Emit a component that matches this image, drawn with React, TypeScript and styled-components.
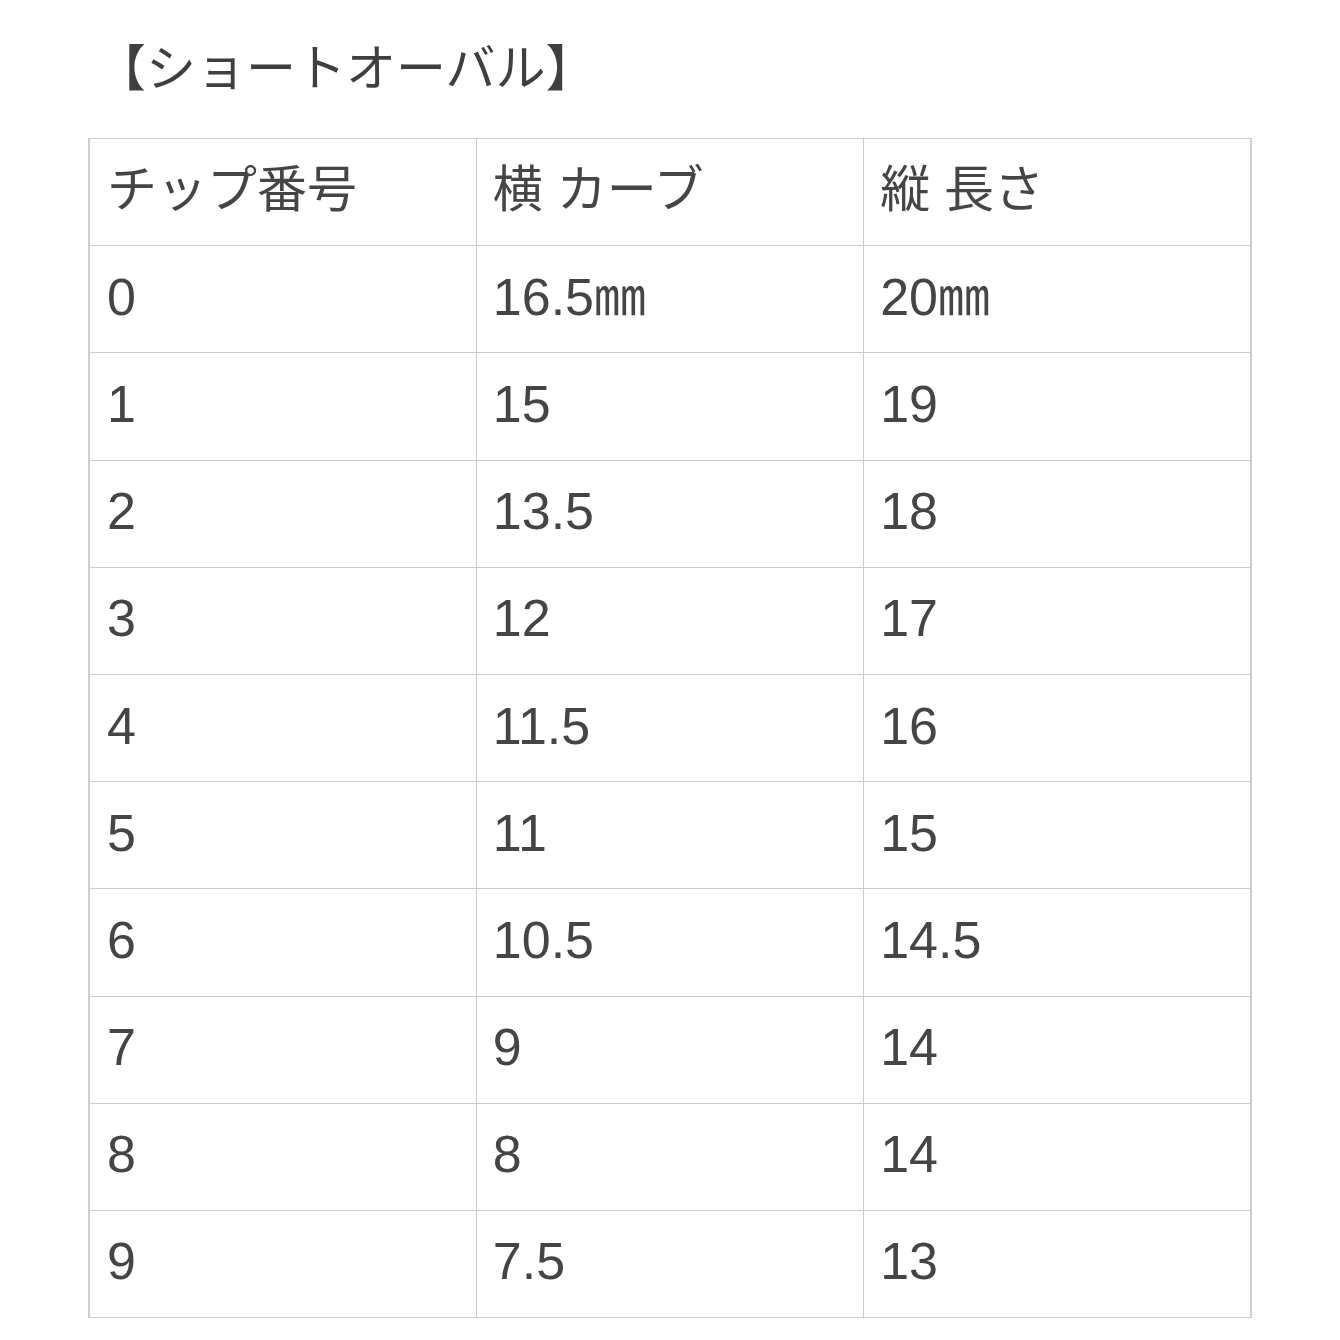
import React from 'react';
import styled, {createGlobalStyle} from "styled-components";

const GlobalStyle = createGlobalStyle`
    html, body {
        margin: 0;
        padding: 0;
        background: #ffffff;
    }

    body {
        font-family: "Liberation Sans", "Noto Sans CJK JP", sans-serif;
        color: #444444;
    }
`

const rows: [string, string, string][] = [
    ["0", "16.5㎜", "20㎜"],
    ["1", "15", "19"],
    ["2", "13.5", "18"],
    ["3", "12", "17"],
    ["4", "11.5", "16"],
    ["5", "11", "15"],
    ["6", "10.5", "14.5"],
    ["7", "9", "14"],
    ["8", "8", "14"],
    ["9", "7.5", "13"],
]

export default function App() {
    return (
        <>
            <GlobalStyle/>
            <Page>
                <Title>【ショートオーバル】</Title>
                <Table>
                    <tbody>
                    <Row>
                        <Cell $head>チップ番号</Cell>
                        <Cell $head>横 カーブ</Cell>
                        <Cell $head>縦 長さ</Cell>
                    </Row>
                    {rows.map((r) => (
                        <Row key={r[0]}>
                            <Cell>{r[0]}</Cell>
                            <Cell>{r[1]}</Cell>
                            <Cell>{r[2]}</Cell>
                        </Row>
                    ))}
                    </tbody>
                </Table>
            </Page>
        </>
    );
}

const Page = styled.div`
    width: 1340px;
    padding: 31px 0 0 88px;
    box-sizing: border-box;
`

const Title = styled.h1`
    margin: 0 0 40px 0;
    padding-left: 8px;
    font-family: "Noto Sans CJK JP", sans-serif;
    font-size: 50px;
    font-weight: 400;
    line-height: 67px;
    color: #3f3f3f;
`

const Table = styled.table`
    width: 1164px;
    border-collapse: collapse;
    table-layout: fixed;
    border-left: 2px solid #cfcfcf;
    border-right: 2px solid #cfcfcf;
`

const Row = styled.tr`
    height: 107.2px;
`

const Cell = styled.td<{ $head?: boolean }>`
    border: 1px solid #cccccc;
    padding: 0 0 5px 16px;
    font-size: ${(p) => (p.$head ? "50px" : "52px")};
    line-height: 1;
    color: #454545;
    vertical-align: middle;
    white-space: nowrap;

    &:first-child {
        padding-left: 17px;
    }
`
